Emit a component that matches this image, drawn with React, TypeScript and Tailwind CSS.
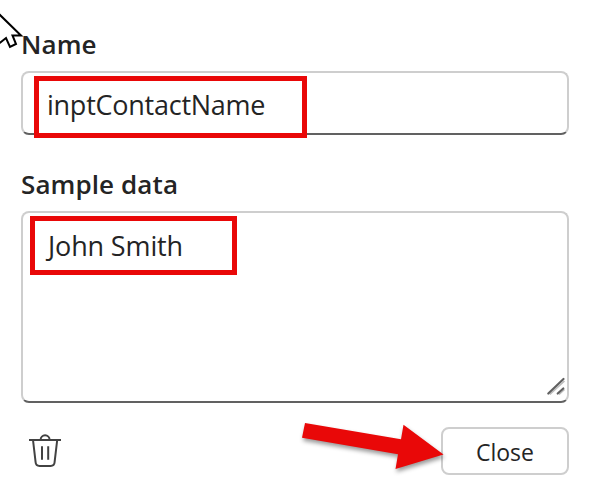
import { useState } from "react";

function Cursor() {
  return (
    <svg className="absolute left-0 top-0" width="26" height="52" viewBox="0 0 26 52" fill="none">
      <path d="M-1 14 L21 35.5 H12.5 L16 44 L10 47 L6 38 L-1 43.5" fill="#fff" stroke="#000" strokeWidth="2" />
    </svg>
  );
}

function TrashIcon() {
  return (
    <svg width="32" height="34" viewBox="0 0 32 34" fill="none" stroke="#424242" strokeWidth="2">
      <path d="M0 6H32" />
      <path d="M11.6 6a4.5 4.7 0 0 1 9 0" />
      <path d="M4 6l2.6 22.2a4 4 0 0 0 4 3.7h11a4 4 0 0 0 4-3.7L28.2 6" />
      <path d="M13 12.3v13.4M19.2 12.3v13.4" />
    </svg>
  );
}

function ResizeGrip() {
  return (
    <svg className="absolute bottom-[6px] right-[2px]" width="22" height="20" viewBox="0 0 22 20" fill="none">
      <path d="M4.8 17.5L19.5 4M14 17.5L19.5 12.5" stroke="#bdbdbd" strokeWidth="1.6" />
      <path d="M3.3 16.5L18.5 2M12.7 16.5L18.3 11.5" stroke="#616161" strokeWidth="2.2" strokeLinecap="round" />
    </svg>
  );
}

function Arrow() {
  return (
    <svg className="absolute left-[296px] top-[416px] drop-shadow-[1px_3px_2px_rgba(0,0,0,0.4)]" width="154" height="60" viewBox="296 416 154 60">
      <path d="M305 423L401 439.3L403.5 424.7L443.5 454.5L395.5 469L398 454.2L302 437.7Z" fill="#e90808" />
    </svg>
  );
}

export default function App() {
  const [name, setName] = useState("inptContactName");
  const [sample, setSample] = useState("John Smith");
  return (
    <main className="relative flex h-[495px] w-[592px] flex-col overflow-hidden bg-white pl-[21px] pr-[23px] pt-[24px] font-['Open_Sans','Noto_Sans',sans-serif] text-[#242424]">
      <label htmlFor="name" className="h-[47px] text-[26px] font-semibold leading-[40px] tracking-[0.1px]">Name</label>
      <input
        id="name"
        value={name}
        onChange={(e) => setName(e.target.value)}
        className="h-[64px] w-full rounded-[8px] border-2 border-[#cecece] border-b-[#616161] pl-[24px] pt-[2px] text-[27px] tracking-[-0.25px] outline-none"
      />
      <label htmlFor="sample" className="mt-[29px] h-[47px] text-[26px] font-semibold leading-[40px] tracking-[0.1px]">Sample data</label>
      <div className="relative h-[192px]">
        <textarea
          id="sample"
          value={sample}
          onChange={(e) => setSample(e.target.value)}
          className="block h-full w-full resize-none rounded-[8px] border-2 border-[#cecece] border-b-[#616161] px-[25px] pt-[13px] text-[27px] leading-[40px] tracking-[-0.15px] outline-none"
        />
        <ResizeGrip />
      </div>
      <div className="mt-[24px] flex h-[48px] items-center justify-between pl-[8px]">
        <button aria-label="Delete"><TrashIcon /></button>
        <button className="h-[48px] w-[128px] rounded-[8px] border-2 border-[#cecece] bg-white pt-[2px] text-[23px] leading-none">Close</button>
      </div>
      <div className="pointer-events-none absolute left-[34px] top-[76px] h-[62px] w-[273px] border-[5px] border-[#e90808]" />
      <div className="pointer-events-none absolute left-[30px] top-[216px] h-[59px] w-[207px] border-[5px] border-[#e90808]" />
      <Arrow />
      <Cursor />
    </main>
  );
}
